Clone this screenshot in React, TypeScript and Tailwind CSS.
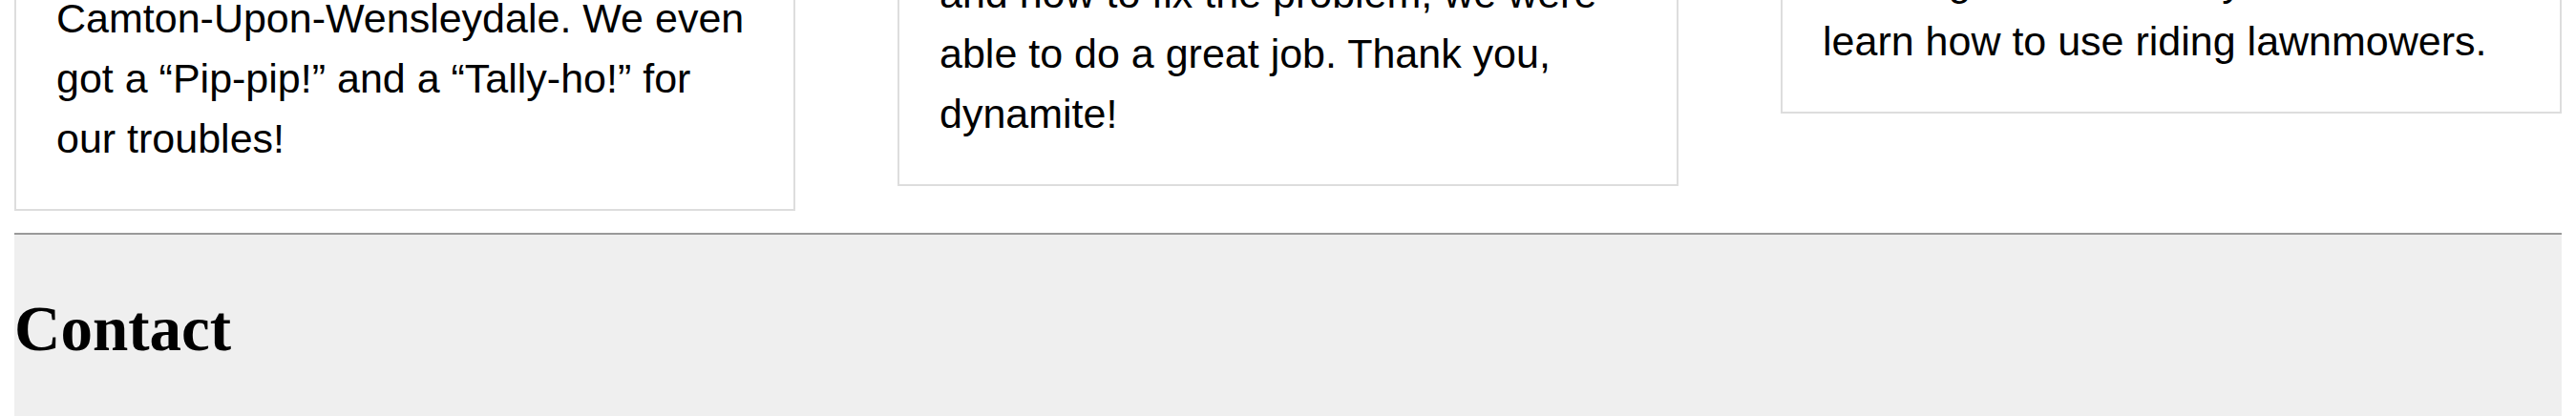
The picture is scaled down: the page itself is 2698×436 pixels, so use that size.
export default function App() {
  return (
    <div className="h-[436px] overflow-hidden bg-white px-[15px] font-['Liberation_Sans',Arial,sans-serif] text-black">
      <div className="flex items-start gap-[107px]">
        <article className="mt-[-182px] w-[818px] shrink-0 border-2 border-[#dddddd] p-[42px] text-[43px] leading-[63px]">
          <p>
            Last week, we trimmed the hedges at a rather lovely stately manor in Camton-Upon-Wensleydale. We even got a “Pip-pip!” and a “Tally-ho!” for our troubles!
          </p>
        </article>
        <article className="mt-[-145px] w-[818px] shrink-0 border-2 border-[#dddddd] p-[42px] text-[43px] leading-[63px]">
          <p>
            When you told us what was wrong and how to fix the problem, we were able to do a great job. Thank you, dynamite!
          </p>
        </article>
        <article className="mt-[-95px] w-[818px] shrink-0 border-2 border-[#dddddd] p-[42px] text-[43px] leading-[63px]">
          <p>
            All the gardeners in my town can now learn how to use riding lawnmowers.
          </p>
        </article>
      </div>
      <section className="mt-[23px] h-[192px] border-t-2 border-[#999999] bg-[#efefef] pt-[65px]">
        <h2 className="font-['Liberation_Serif','Times_New_Roman',serif] text-[67px] font-bold leading-none">
          Contact
        </h2>
      </section>
    </div>
  );
}
